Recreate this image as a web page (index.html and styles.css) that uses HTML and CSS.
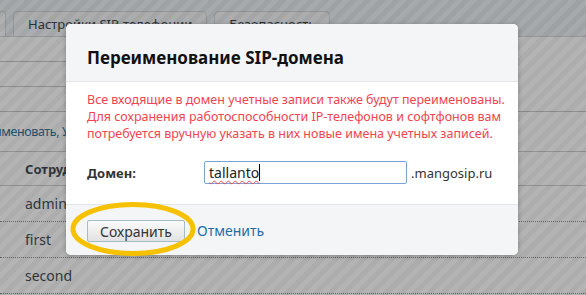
FILE: index.html
```html
<!DOCTYPE html>
<html lang="ru">
  <head>
    <meta charset="UTF-8" />
    <meta name="viewport" content="width=device-width, initial-scale=1.0" />
    <title>Переименование SIP-домена</title>
    <link rel="stylesheet" href="styles.css">
  </head>
  <body>
    <div class="page">
      <div class="tabs">
        <div class="tab tab-cut"></div>
        <div class="tab">Настройки SIP-телефонии</div>
        <div class="tab">Безопасность</div>
      </div>
      <div class="panel">
        <div class="panel-row"></div>
        <div class="panel-row"></div>
        <div class="panel-row short"></div>
      </div>
      <div class="actions">
        <a href="#" class="action-link">Переименовать</a>, <a href="#" class="action-link">Удалить</a>
      </div>
      <table class="users">
        <tr><th>Сотрудник</th></tr>
        <tr><td>admin</td></tr>
        <tr><td>first</td></tr>
        <tr><td>second</td></tr>
      </table>

      <div class="overlay"></div>

      <div class="modal">
        <div class="modal-head">
          <h2>Переименование SIP-домена</h2>
        </div>
        <div class="modal-body">
          <p class="warning">Все входящие в домен учетные записи также будут переименованы. Для сохранения работоспособности IP-телефонов и софтфонов вам потребуется вручную указать в них новые имена учетных записей.</p>
          <div class="field">
            <label class="field-label">Домен:</label>
            <div class="field-input"><span class="typo">tallanto</span><span class="caret"></span></div>
            <span class="field-suffix">.mangosip.ru</span>
          </div>
        </div>
        <div class="modal-foot">
          <button class="btn">Сохранить</button>
          <a href="#" class="cancel">Отменить</a>
        </div>
      </div>

      <svg class="mark" width="132" height="60" viewBox="0 0 132 60">
        <ellipse cx="63" cy="27" rx="60" ry="24.5" fill="none" stroke="#f6c100" stroke-width="5" />
      </svg>
    </div>
  </body>
</html>
```

FILE: styles.css
```css
body {
  margin: 0;
  padding: 0;
  font-family: 'Noto Sans', 'Open Sans', sans-serif;
  background: #fff;
  overflow: hidden;
}
.page {
  position: relative;
  width: 586px;
  height: 295px;
  overflow: hidden;
}
.tabs {
  display: flex;
  align-items: flex-end;
  gap: 7px;
  height: 37px;
  background: #ebf0f2;
  border-bottom: 1px solid #d6d6d6;
  box-sizing: border-box;
}
.tab {
  height: 25px;
  padding: 0 14px;
  font-size: 13px;
  line-height: 24px;
  color: #3b4650;
  background: #f1f4f5;
  border: 1px solid #d2d6d8;
  border-bottom: none;
  border-radius: 5px 5px 0 0;
  box-sizing: border-box;
}
.tab-cut {
  width: 7px;
  padding: 0;
  margin-left: -1px;
  background: #f6f8f9;
}
.panel-row {
  width: 250px;
  height: 24px;
  border-bottom: 1px solid #c8c8c8;
}
.panel-row.short {
  width: 586px;
}
.actions {
  height: 39px;
  line-height: 40px;
  font-size: 12.5px;
  letter-spacing: -0.4px;
  margin-left: -35px;
  white-space: nowrap;
  color: #2f6f9a;
}
.action-link {
  color: #2f6f9a;
  text-decoration: none;
}
.users {
  width: 100%;
  border-collapse: collapse;
  font-size: 14px;
  color: #3f4a52;
}
.users th {
  text-align: left;
  font-size: 13px;
  height: 33px;
  padding: 0 25px;
  border-top: 1px solid #cfcfcf;
  border-bottom: 1px solid #cfcfcf;
}
.users td {
  height: 35px;
  padding: 0 25px;
  border-bottom: 1px dotted #8a8a8a;
}
.overlay {
  position: absolute;
  inset: 0;
  background:
    repeating-linear-gradient(-45deg, rgba(0, 0, 0, 0.03) 0 5px, rgba(255, 255, 255, 0.03) 5px 10px),
    rgba(0, 0, 0, 0.3);
}
.modal {
  position: absolute;
  left: 66px;
  top: 24px;
  width: 452px;
  background: #fff;
  border-radius: 5px;
  overflow: hidden;
  box-shadow: 0 1px 5px rgba(0, 0, 0, 0.25);
}
.modal-head {
  height: 58px;
  padding: 0 21px;
  display: flex;
  align-items: center;
  background: #f4f5f7;
  border-bottom: 1px solid #e3e4e6;
  box-sizing: border-box;
}
.modal-head h2 {
  margin: 10px 0 0;
  font-size: 17px;
  font-weight: bold;
  color: #111;
}
.modal-body {
  padding: 9px 10px 20px 21px;
}
.warning {
  margin: 0;
  font-size: 12.5px;
  line-height: 17px;
  color: #f2444f;
}
.field {
  display: flex;
  align-items: center;
  margin-top: 19px;
}
.field-label {
  width: 117px;
  font-size: 13px;
  font-weight: bold;
  color: #333;
}
.field-input {
  display: flex;
  align-items: center;
  width: 203px;
  height: 23px;
  padding: 0 4px;
  border: 1px solid #7da2d6;
  border-radius: 2px;
  font-size: 14px;
  color: #222;
  box-sizing: border-box;
}
.typo {
  text-decoration: underline wavy #e84a4a;
  text-decoration-thickness: 1px;
  text-underline-offset: 2px;
}
.caret {
  width: 1px;
  height: 17px;
  background: #000;
}
.field-suffix {
  margin-left: 4px;
  font-size: 13px;
  color: #333;
}
.modal-foot {
  height: 51px;
  padding: 15px 21px 0;
  display: flex;
  align-items: flex-start;
  background: #f4f5f7;
  border-top: 1px solid #e3e4e6;
  box-sizing: border-box;
}
.btn {
  width: 98px;
  height: 22px;
  padding: 0;
  font-family: inherit;
  font-size: 14px;
  color: #333;
  background: linear-gradient(#fbfbfb, #e2e2e2);
  border: 1px solid #a4bcc6;
  border-radius: 2px;
}
.cancel {
  margin-left: 12px;
  line-height: 22px;
  font-size: 14px;
  color: #1d6fa9;
  text-decoration: none;
}
.mark {
  position: absolute;
  left: 70px;
  top: 202px;
}
```
